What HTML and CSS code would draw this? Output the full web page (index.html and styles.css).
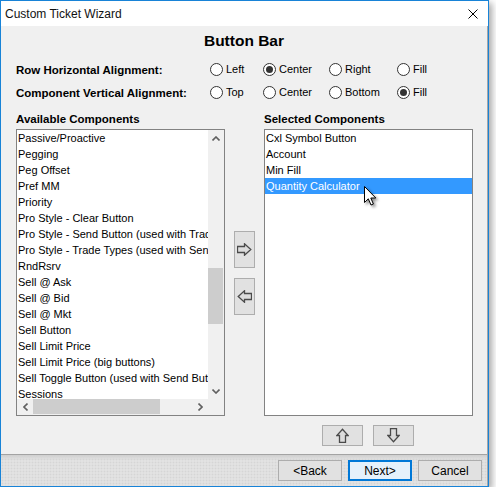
FILE: index.html
```html
<!DOCTYPE html>
<html>
<head>
<meta charset="utf-8">
<link rel="stylesheet" href="styles.css">
</head>
<body>
<div class="window">
  <div class="titlebar">
    <span class="title">Custom Ticket Wizard</span>
    <svg class="close" width="10" height="10" viewBox="0 0 10 10"><path d="M0.5 0.5L9.5 9.5M9.5 0.5L0.5 9.5" stroke="#000" stroke-width="1" fill="none"/></svg>
  </div>
  <div class="body">
    <div class="main">
      <h1 class="heading">Button Bar</h1>
      <div class="options">
        <div class="opt-label">Row Horizontal Alignment:</div>
        <div class="radio"><span class="circle"></span>Left</div>
        <div class="radio"><span class="circle on"></span>Center</div>
        <div class="radio"><span class="circle"></span>Right</div>
        <div class="radio"><span class="circle"></span>Fill</div>
        <div class="opt-label">Component Vertical Alignment:</div>
        <div class="radio"><span class="circle"></span>Top</div>
        <div class="radio"><span class="circle"></span>Center</div>
        <div class="radio"><span class="circle"></span>Bottom</div>
        <div class="radio"><span class="circle on"></span>Fill</div>
      </div>
      <div class="lists">
        <div class="list-label">Available Components</div>
        <div></div>
        <div class="list-label">Selected Components</div>

        <div class="listbox avail">
          <div class="viewport">
            <div class="item">Passive/Proactive</div>
            <div class="item">Pegging</div>
            <div class="item">Peg Offset</div>
            <div class="item">Pref MM</div>
            <div class="item">Priority</div>
            <div class="item">Pro Style - Clear Button</div>
            <div class="item">Pro Style - Send Button (used with Trade Types)</div>
            <div class="item">Pro Style - Trade Types (used with Send Button)</div>
            <div class="item">RndRsrv</div>
            <div class="item">Sell @ Ask</div>
            <div class="item">Sell @ Bid</div>
            <div class="item">Sell @ Mkt</div>
            <div class="item">Sell Button</div>
            <div class="item">Sell Limit Price</div>
            <div class="item">Sell Limit Price (big buttons)</div>
            <div class="item">Sell Toggle Button (used with Send Button)</div>
            <div class="item">Sessions</div>
          </div>
          <div class="vscroll">
            <div class="sbtn"><svg width="8" height="5" viewBox="0 0 8 5"><path d="M0.5 4.5L4 1L7.5 4.5" stroke="#606060" stroke-width="1.6" fill="none"/></svg></div>
            <div class="vtrack"><div class="vthumb"></div></div>
            <div class="sbtn"><svg width="8" height="5" viewBox="0 0 8 5"><path d="M0.5 0.5L4 4L7.5 0.5" stroke="#606060" stroke-width="1.6" fill="none"/></svg></div>
          </div>
          <div class="hscroll">
            <div class="sbtn"><svg width="5" height="8" viewBox="0 0 5 8"><path d="M4.5 0.5L1 4L4.5 7.5" stroke="#606060" stroke-width="1.6" fill="none"/></svg></div>
            <div class="htrack"><div class="hthumb"></div></div>
            <div class="sbtn"><svg width="5" height="8" viewBox="0 0 5 8"><path d="M0.5 0.5L4 4L0.5 7.5" stroke="#606060" stroke-width="1.6" fill="none"/></svg></div>
          </div>
          <div class="corner"></div>
        </div>

        <div class="transfer">
          <div class="btn tbtn"><svg width="15" height="13" viewBox="0 0 15 13"><path d="M0.5 3.5H7.5V0.8L13.8 6.5L7.5 12.2V9.5H0.5Z" fill="#dcdcdc" stroke="#4a4a4a" stroke-width="1.3"/></svg></div>
          <div class="btn tbtn"><svg width="15" height="13" viewBox="0 0 15 13"><path d="M14.5 3.5H7.5V0.8L1.2 6.5L7.5 12.2V9.5H14.5Z" fill="#dcdcdc" stroke="#4a4a4a" stroke-width="1.3"/></svg></div>
        </div>

        <div class="listbox sel">
          <div class="item">Cxl Symbol Button</div>
          <div class="item">Account</div>
          <div class="item">Min Fill</div>
          <div class="item selected">Quantity Calculator</div>
          <svg class="cursor" width="14" height="21" viewBox="0 0 14 21"><path d="M0.5 0.5V16.5L4.3 12.8L7 19L9.4 18L6.8 12H11.8Z" fill="#fff" stroke="#000" stroke-width="1" stroke-linejoin="miter"/></svg>
        </div>

        <div></div>
        <div></div>
        <div class="order">
          <div class="btn obtn"><svg width="13" height="15" viewBox="0 0 13 15"><path d="M3.5 14.5V7.5H0.8L6.5 1.2L12.2 7.5H9.5V14.5Z" fill="#dcdcdc" stroke="#4a4a4a" stroke-width="1.3"/></svg></div>
          <div class="btn obtn"><svg width="13" height="15" viewBox="0 0 13 15"><path d="M3.5 0.5V7.5H0.8L6.5 13.8L12.2 7.5H9.5V0.5Z" fill="#dcdcdc" stroke="#4a4a4a" stroke-width="1.3"/></svg></div>
        </div>
      </div>
    </div>
    <div class="footer">
      <div class="btn fbtn">&lt;Back</div>
      <div class="btn fbtn default">Next&gt;</div>
      <div class="btn fbtn">Cancel</div>
    </div>
  </div>
</div>
</body>
</html>
```
FILE: styles.css
```css
html, body {
  margin: 0;
  padding: 0;
  background: #fff;
}
body {
  font-family: "Liberation Sans", Arial, sans-serif;
  font-size: 11px;
  color: #000;
}
.window {
  width: 487px;
  height: 485px;
  border: 1px solid #1883d7;
  display: flex;
  flex-direction: column;
  box-shadow: 3px 3px 7px rgba(0, 0, 0, 0.35);
  background: #f0f0f0;
}
.titlebar {
  height: 25px;
  flex: none;
  background: #fff;
  display: flex;
  align-items: center;
  justify-content: space-between;
  padding-left: 4px;
  padding-right: 10px;
}
.title {
  font-size: 12px;
  line-height: 25px;
  padding-top: 1px;
  color: #111;
}
.close {
  display: block;
  margin-top: 1px;
}
.body {
  flex: 1;
  display: flex;
  flex-direction: column;
  border-right: 1px solid #a7a7a7;
}
.main {
  flex: 1;
  padding: 4px 0 0 15px;
}
.heading {
  margin: 0;
  font-size: 15.5px;
  line-height: 21px;
  font-weight: bold;
  text-align: center;
  padding-right: 15px;
}
.options {
  margin-top: 7px;
  display: grid;
  grid-template-columns: 194px 53px 66px 68px auto;
  grid-auto-rows: 23px;
  align-items: center;
}
.opt-label {
  font-weight: bold;
  font-size: 11.5px;
}
.radio {
  display: flex;
  align-items: center;
  gap: 3px;
  line-height: 13px;
}
.circle {
  width: 11px;
  height: 11px;
  border: 1px solid #333;
  border-radius: 50%;
  background: #fff;
  display: flex;
  align-items: center;
  justify-content: center;
  flex: none;
}
.circle.on::after {
  content: "";
  width: 7px;
  height: 7px;
  border-radius: 50%;
  background: #333;
}
.lists {
  margin-top: 8px;
  display: grid;
  grid-template-columns: 209px 39px 209px;
  grid-template-rows: 17px 287px 30px;
}
.list-label {
  font-weight: bold;
  font-size: 11.5px;
  line-height: 14px;
}
.listbox {
  border: 1px solid #828282;
  background: #fff;
  box-sizing: border-box;
  overflow: hidden;
}
.avail {
  display: grid;
  grid-template-columns: 191px 16px;
  grid-template-rows: 269px 16px;
}
.viewport {
  overflow: hidden;
}
.item {
  height: 16px;
  line-height: 16px;
  padding-left: 1px;
  white-space: nowrap;
  overflow: hidden;
}
.vscroll {
  background: #f0f0f0;
  display: flex;
  flex-direction: column;
}
.sbtn {
  flex: none;
  width: 16px;
  height: 16px;
  display: flex;
  align-items: center;
  justify-content: center;
}
.vtrack {
  flex: 1;
  padding-top: 122px;
}
.vthumb {
  width: 15px;
  height: 56px;
  background: #cdcdcd;
}
.hscroll {
  background: #f0f0f0;
  display: flex;
}
.htrack {
  flex: 1;
}
.hthumb {
  width: 127px;
  height: 15px;
  background: #cdcdcd;
}
.corner {
  background: #f0f0f0;
}
.sel {
  position: relative;
}
.selected {
  background: #3399ff;
  color: #fff;
}
.cursor {
  position: absolute;
  left: 99px;
  top: 56px;
  filter: drop-shadow(2px 2px 1.5px rgba(0, 0, 0, 0.45));
}
.btn {
  box-sizing: border-box;
  background: #e1e1e1;
  border: 1px solid #adadad;
  display: flex;
  align-items: center;
  justify-content: center;
}
.transfer {
  display: flex;
  flex-direction: column;
  justify-content: center;
  gap: 10px;
  padding-left: 9px;
}
.tbtn {
  width: 21px;
  height: 37px;
}
.order {
  display: flex;
  justify-content: center;
  gap: 10px;
  padding-top: 9px;
  padding-right: 1px;
}
.obtn {
  width: 41px;
  height: 21px;
}
.footer {
  flex: none;
  height: 26px;
  border-top: 1px solid #a3a3a3;
  padding: 5px 5px 0 0;
  display: flex;
  justify-content: flex-end;
  gap: 6px;
  background-color: #e2e2e2;
  background-image: radial-gradient(circle, #d5d5d5 0.8px, transparent 1.1px), linear-gradient(#cfcfcf, #e2e2e2 5px);
  background-size: 3px 3px, 100% 100%;
}
.fbtn {
  width: 64px;
  height: 21px;
  font-size: 12px;
}
.default {
  border-color: #0078d7;
  box-shadow: inset 0 0 0 1px #0078d7;
  background: #e5f1fb;
}
```
